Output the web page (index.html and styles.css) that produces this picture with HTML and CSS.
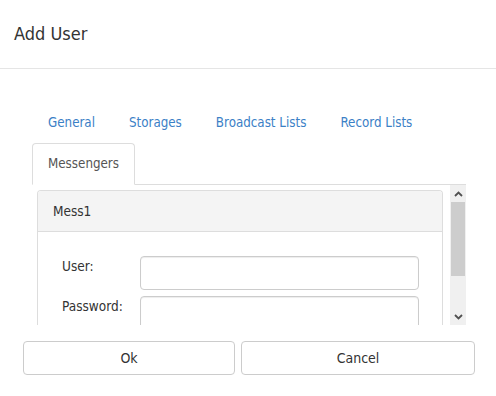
FILE: index.html
```html
<!DOCTYPE html>
<html>
<head>
<meta charset="utf-8">
<title>Add User</title>
<link rel="stylesheet" href="styles.css">
</head>
<body>
<div class="dialog">
  <div class="dialog-header"><h1 class="dialog-title">Add User</h1></div>
  <div class="dialog-body">
    <ul class="tabs">
      <li class="tab"><a class="tab-link">General</a></li>
      <li class="tab"><a class="tab-link">Storages</a></li>
      <li class="tab"><a class="tab-link">Broadcast Lists</a></li>
      <li class="tab"><a class="tab-link">Record Lists</a></li>
      <li class="tab"><a class="tab-link active">Messengers</a></li>
    </ul>
    <div class="tab-content">
      <div class="scroll-view">
        <div class="panel">
          <div class="panel-heading">Mess1</div>
          <div class="panel-body">
            <div class="form-row">
              <label class="form-label">User:</label>
              <input class="form-input" type="text">
            </div>
            <div class="form-row">
              <label class="form-label">Password:</label>
              <input class="form-input" type="password">
            </div>
          </div>
        </div>
      </div>
      <div class="scrollbar">
        <div class="sb-button">
          <svg width="9" height="6" viewBox="0 0 9 6"><path d="M1 5 L4.5 1.5 L8 5" fill="none" stroke="#505050" stroke-width="1.8"/></svg>
        </div>
        <div class="sb-thumb"></div>
        <div class="sb-track"></div>
        <div class="sb-button">
          <svg width="9" height="6" viewBox="0 0 9 6"><path d="M1 1 L4.5 4.5 L8 1" fill="none" stroke="#505050" stroke-width="1.8"/></svg>
        </div>
      </div>
    </div>
  </div>
  <div class="dialog-footer">
    <button class="btn btn-ok">Ok</button>
    <button class="btn btn-cancel">Cancel</button>
  </div>
</div>
</body>
</html>
```
FILE: styles.css
```css
html, body {
  margin: 0;
  padding: 0;
  background: #fff;
}
body {
  font-family: "DejaVu Sans Condensed", "DejaVu Sans", sans-serif;
  color: #333;
  font-size: 13.5px;
}
.dialog {
  width: 496px;
  height: 396px;
  display: flex;
  flex-direction: column;
}
.dialog-header {
  height: 69px;
  border-bottom: 1px solid #e5e5e5;
  display: flex;
  align-items: center;
  padding-left: 14px;
  box-sizing: border-box;
}
.dialog-title {
  margin: 0;
  font-weight: normal;
  font-size: 18px;
  color: #333;
  line-height: 24px;
}
.dialog-body {
  padding: 33px 30px 0 32px;
}
.tabs {
  list-style: none;
  margin: 0;
  padding: 0;
  display: flex;
  flex-wrap: wrap;
  border-bottom: 1px solid #ddd;
}
.tab {
  margin-bottom: -1px;
}
.tab-link {
  display: block;
  padding: 10px 15px;
  margin-right: 2px;
  line-height: 20px;
  border: 1px solid transparent;
  border-radius: 4px 4px 0 0;
  color: #3b80c6;
  font-size: 13.25px;
}
.tab-link.active {
  color: #555;
  border-color: #ddd;
  border-bottom-color: #fff;
  background: #fff;
}
.tab-content {
  display: flex;
  height: 140px;
}
.scroll-view {
  flex: 1;
  overflow: hidden;
  padding: 5px 7px 0 5px;
}
.panel {
  border: 1px solid #ddd;
  border-bottom: none;
  border-radius: 4px 4px 0 0;
  background: #fff;
}
.panel-heading {
  background: #f4f4f4;
  border-bottom: 1px solid #ddd;
  padding: 10px 15px;
  line-height: 20px;
  color: #333;
  border-radius: 3px 3px 0 0;
}
.panel-body {
  padding: 24px 23px 0 24px;
}
.form-row {
  display: flex;
  align-items: flex-start;
  margin-bottom: 6px;
}
.form-label {
  width: 78px;
  flex: none;
  line-height: 20px;
  color: #333;
}
.form-input {
  flex: 1;
  height: 34px;
  box-sizing: border-box;
  border: 1px solid #ccc;
  border-radius: 4px;
  box-shadow: inset 0 1px 1px rgba(0,0,0,.075);
  margin: 0;
  padding: 6px 12px;
  min-width: 0;
}
.scrollbar {
  width: 16px;
  flex: none;
  display: flex;
  flex-direction: column;
  background: #f0f0f0;
}
.sb-button {
  height: 17px;
  display: flex;
  align-items: center;
  justify-content: center;
}
.sb-thumb {
  height: 74px;
  background: #cdcdcd;
  margin: 0 1px;
}
.sb-track {
  flex: 1;
}
.dialog-footer {
  display: flex;
  gap: 6px;
  padding: 16px 0 0 23px;
}
.btn {
  height: 34px;
  box-sizing: border-box;
  border: 1px solid #ccc;
  border-radius: 4px;
  background: #fff;
  color: #333;
  font-family: inherit;
  font-size: 14px;
  padding: 0;
}
.btn-ok {
  width: 212px;
}
.btn-cancel {
  width: 234px;
}
```
